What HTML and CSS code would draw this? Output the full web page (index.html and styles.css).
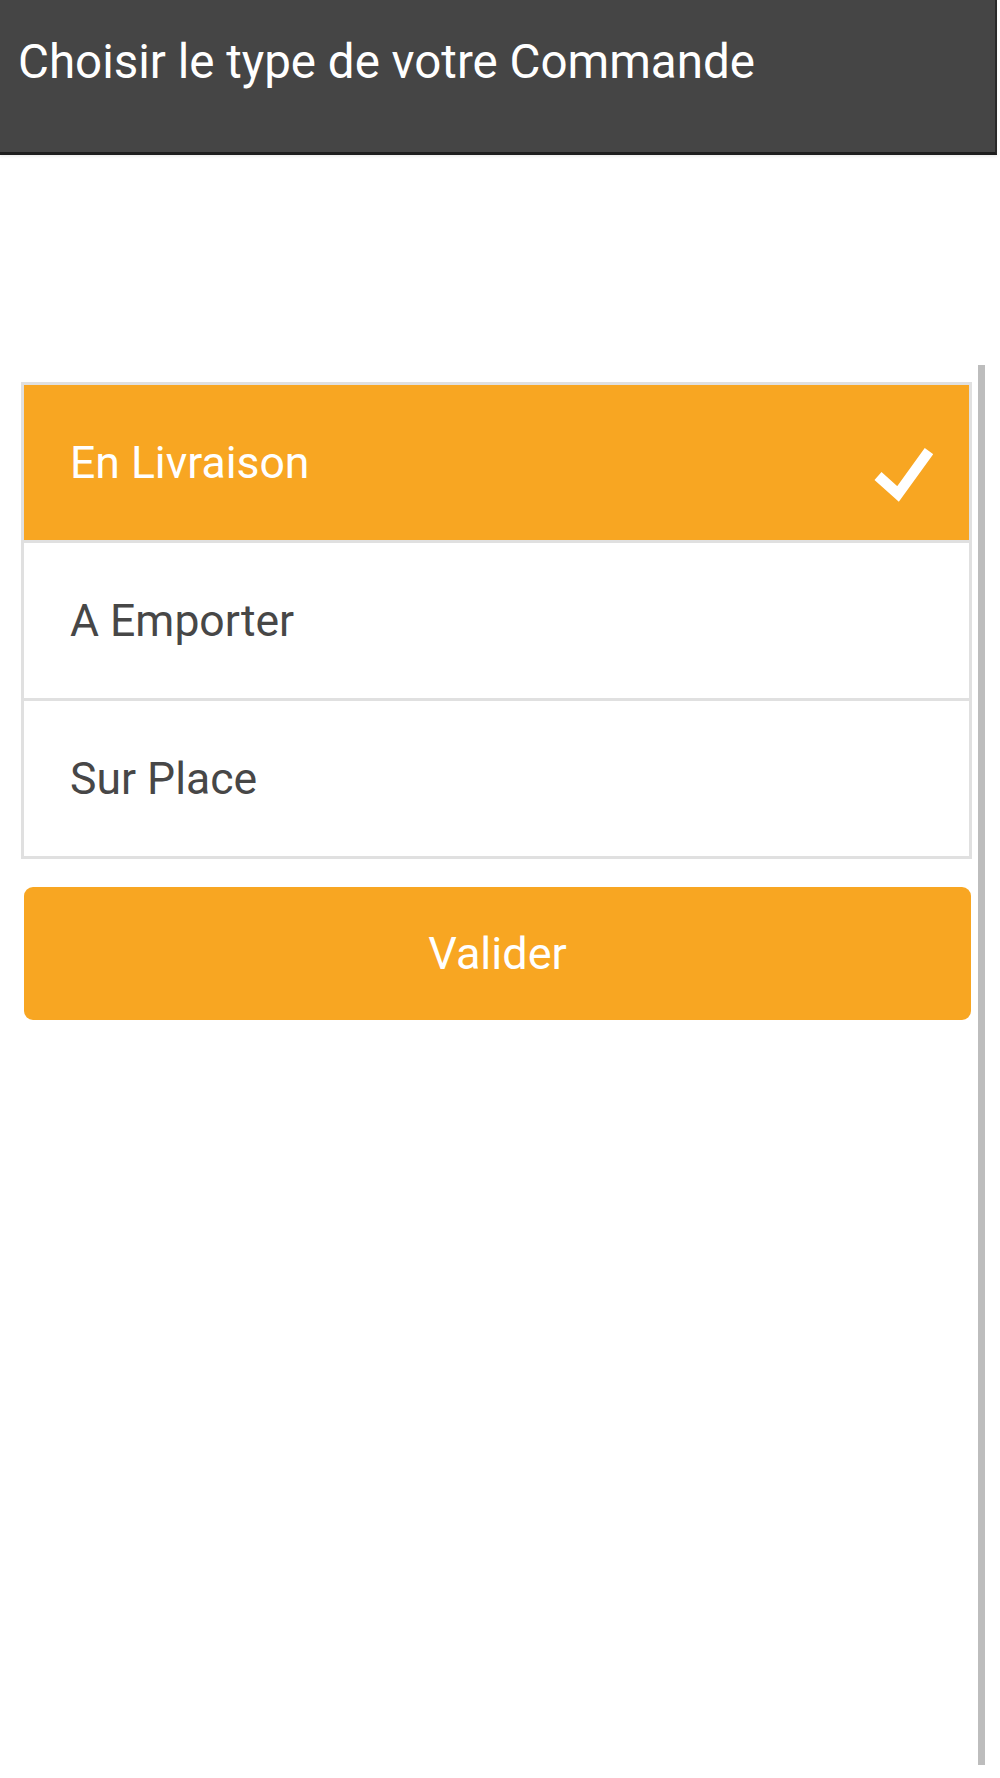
FILE: index.html
```html
<!DOCTYPE html>
<html lang="fr">

<head>
  <meta charset="UTF-8">
  <meta name="viewport" content="width=device-width, initial-scale=1.0">
  <title>Type de commande</title>
  <link rel="stylesheet" href="styles.css">
</head>

<body>
  <div class="topbar">
    <h1 class="title">Choisir le type de votre Commande</h1>
  </div>

  <div class="content">
    <ul class="choices">
      <li class="choice selected">
        <span>En Livraison</span>
        <svg class="check" width="60" height="60" viewBox="0 0 60 60">
          <path d="M5 33 L25 51 L56 8" fill="none" stroke="#fff" stroke-width="10.5"/>
        </svg>
      </li>
      <li class="choice"><span>A Emporter</span></li>
      <li class="choice"><span>Sur Place</span></li>
    </ul>
    <button class="valider">Valider</button>
  </div>

  <div class="scrollbar"></div>
</body>

</html>
```

FILE: styles.css
```css
body{
  margin:0;
  font-family: Roboto, "Liberation Sans", sans-serif;
  background:#fff;
  position: relative;
  min-height:1778px;
}
.topbar{
  height:152px;
  margin-right:3px;
  background:#454545;
  border-bottom:3px solid #1e1e1e;
  border-right:2px solid #2a2a2a;
  box-shadow:0 2px 2px rgba(0,0,0,0.06);
}
.title{
  margin:0;
  padding:34px 0 0 18px;
  font-size:47.5px;
  font-weight:normal;
  line-height:56px;
  color:#fff;
}
.content{
  padding:227px 28px 0 21px;
}
.choices{
  list-style-type:none;
  margin:0;
  padding:0;
  border:3px solid #e0e0e0;
  border-bottom:none;
}
.choice{
  display:flex;
  align-items:center;
  justify-content:space-between;
  height:155px;
  padding:0 36px 0 46px;
  border-bottom:3px solid #e0e0e0;
  font-size:44.5px;
  color:#474747;
  background:#fff;
}
.choice.selected{
  background:#f8a622;
  color:#fff;
}
.check{
  display:block;
  margin-top:21px;
}
.valider{
  display:block;
  width:947px;
  height:133px;
  margin:28px 0 0 3px;
  border:none;
  border-radius:9px;
  background:#f8a622;
  color:#fff;
  font-family: Roboto, "Liberation Sans", sans-serif;
  font-size:45px;
}
.scrollbar{
  position:absolute;
  top:365px;
  left:978px;
  width:7px;
  height:1400px;
  background:#bdbdbd;
}
```
